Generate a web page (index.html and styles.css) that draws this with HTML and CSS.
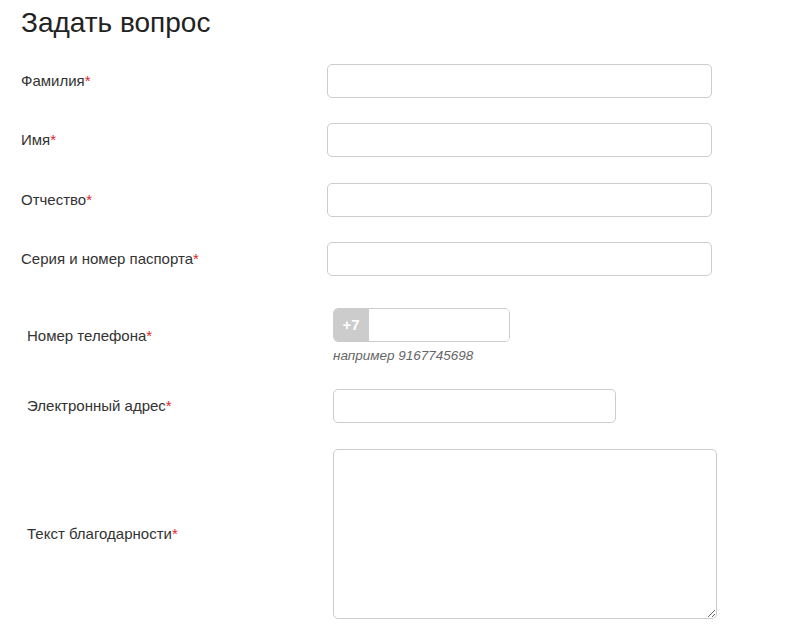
FILE: index.html
```html
<!DOCTYPE html>
<html lang="ru">
<head>
<meta charset="utf-8">
<title>Задать вопрос</title>
<link rel="stylesheet" href="styles.css">
</head>
<body>
<div class="page">
  <h1 class="title">Задать вопрос</h1>
  <form class="form">
    <div class="block">
      <div class="row">
        <label class="label">Фамилия<span class="req">*</span></label>
        <input class="field field-wide" type="text">
      </div>
      <div class="row">
        <label class="label">Имя<span class="req">*</span></label>
        <input class="field field-wide" type="text">
      </div>
      <div class="row">
        <label class="label">Отчество<span class="req">*</span></label>
        <input class="field field-wide" type="text">
      </div>
      <div class="row">
        <label class="label">Серия и номер паспорта<span class="req">*</span></label>
        <input class="field field-wide" type="text">
      </div>
    </div>
    <div class="block block-inner">
      <div class="row">
        <label class="label">Номер телефона<span class="req">*</span></label>
        <div class="group">
          <div class="phone">
            <span class="prefix">+7</span>
            <input class="phone-input" type="text">
          </div>
          <div class="hint">например 9167745698</div>
        </div>
      </div>
      <div class="row">
        <label class="label">Электронный адрес<span class="req">*</span></label>
        <input class="field field-email" type="text">
      </div>
      <div class="row">
        <label class="label">Текст благодарности<span class="req">*</span></label>
        <textarea class="field area"></textarea>
      </div>
    </div>
  </form>
</div>
</body>
</html>
```
FILE: styles.css
```css
html, body {
  margin: 0;
  padding: 0;
  background: #fff;
}
body {
  font-family: "Liberation Sans", Arial, sans-serif;
  color: #333;
}
.page {
  padding-left: 21px;
}
.title {
  margin: 7px 0 25px;
  font-size: 28px;
  line-height: 32px;
  font-weight: normal;
  color: #222;
}
.form {
  display: flex;
  flex-direction: column;
  gap: 32px;
}
.block {
  display: flex;
  flex-direction: column;
  gap: 25.33px;
}
.block-inner {
  padding-left: 6px;
}
.row {
  display: flex;
  align-items: center;
}
.label {
  width: 306px;
  flex: none;
  font-size: 15px;
  line-height: 18px;
  color: #333;
}
.req {
  color: #e0242b;
}
.field {
  box-sizing: border-box;
  height: 34px;
  border: 1px solid #cccccc;
  border-radius: 5px;
  background: #fff;
  padding: 6px 10px;
  font: 14px "Liberation Sans", Arial, sans-serif;
  margin: 0;
  outline: none;
}
.field-wide {
  width: 385px;
}
.field-email {
  width: 283px;
}
.area {
  width: 384px;
  height: 170px;
  resize: both;
  display: block;
}
.group {
  display: flex;
  flex-direction: column;
}
.phone {
  box-sizing: border-box;
  width: 177px;
  height: 34px;
  display: flex;
  border: 1px solid #cccccc;
  border-radius: 5px;
  overflow: hidden;
}
.prefix {
  width: 36px;
  flex: none;
  background: #cccccc;
  color: #fff;
  font-weight: bold;
  font-size: 15px;
  display: flex;
  align-items: center;
  justify-content: center;
  margin: -1px 0 -1px -1px;
}
.phone-input {
  flex: 1;
  min-width: 0;
  border: 0;
  outline: none;
  padding: 0 8px;
  font: 14px "Liberation Sans", Arial, sans-serif;
}
.hint {
  margin-top: 6px;
  font-size: 13.5px;
  line-height: 16px;
  font-style: italic;
  color: #666;
}
```
